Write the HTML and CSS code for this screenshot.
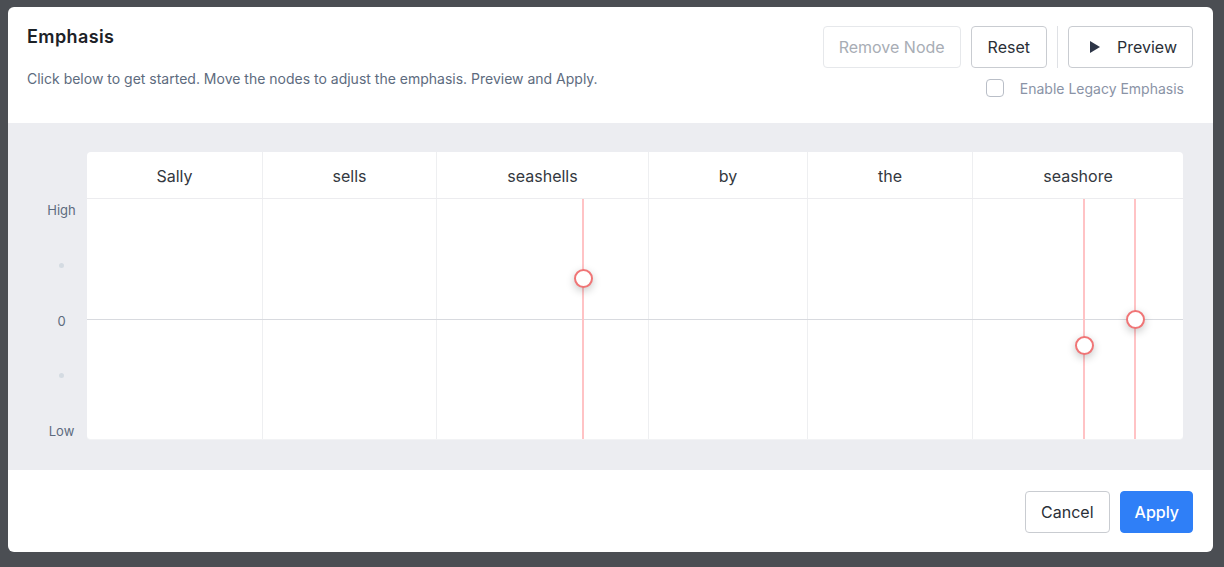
FILE: index.html
```html
<!DOCTYPE html>
<html>
<head>
<meta charset="utf-8">
<link rel="stylesheet" href="styles.css">
</head>
<body>
<div class="backdrop">
  <div class="modal">
    <div class="modal-header">
      <div class="intro">
        <h2 class="title">Emphasis</h2>
        <p class="desc">Click below to get started. Move the nodes to adjust the emphasis. Preview and Apply.</p>
      </div>
      <div class="controls">
        <div class="btn-row">
          <button class="btn btn-disabled">Remove Node</button>
          <button class="btn">Reset</button>
          <span class="sep"></span>
          <button class="btn btn-preview">
            <svg class="play" width="10" height="12" viewBox="0 0 10 12"><path d="M0 0 L10 6 L0 12 Z" fill="#2d3547"/></svg>
            Preview
          </button>
        </div>
        <label class="legacy"><span class="checkbox"></span>Enable Legacy Emphasis</label>
      </div>
    </div>
    <div class="modal-body">
      <div class="axis">
        <div class="axis-head"></div>
        <div class="axis-ticks">
          <span class="tick">High</span>
          <span class="tick"><i class="dot"></i></span>
          <span class="tick">0</span>
          <span class="tick"><i class="dot"></i></span>
          <span class="tick">Low</span>
        </div>
      </div>
      <div class="chart">
        <div class="words">
          <div class="word first" style="width:175px">Sally</div>
          <div class="word" style="width:174px">sells</div>
          <div class="word" style="width:212px">seashells</div>
          <div class="word" style="width:159px">by</div>
          <div class="word" style="width:165px">the</div>
          <div class="word" style="width:211px">seashore</div>
        </div>
        <div class="plot">
          <div class="cols">
            <div class="col first" style="width:175px"></div>
            <div class="col" style="width:174px"></div>
            <div class="col" style="width:212px"></div>
            <div class="col" style="width:159px"></div>
            <div class="col" style="width:165px"></div>
            <div class="col" style="width:211px"></div>
          </div>
          <div class="zero"></div>
          <div class="vline" style="left:496px"></div>
          <div class="vline" style="left:997px"></div>
          <div class="vline" style="left:1048px"></div>
          <div class="node" style="left:496px;top:79px"></div>
          <div class="node" style="left:997px;top:146px"></div>
          <div class="node" style="left:1048px;top:120px"></div>
        </div>
      </div>
    </div>
    <div class="modal-footer">
      <button class="btn btn-cancel">Cancel</button>
      <button class="btn btn-primary">Apply</button>
    </div>
  </div>
</div>
</body>
</html>
```
FILE: styles.css
```css
* { box-sizing: border-box; }
html, body { margin: 0; padding: 0; }
body {
  font-family: Inter, "Noto Sans", "Liberation Sans", sans-serif;
  background: #4b4e53;
  width: 1224px;
  height: 567px;
  overflow: hidden;
}
.backdrop {
  padding: 7px 11px 15px 8px;
}
.modal {
  width: 1205px;
  height: 545px;
  background: #fff;
  border-radius: 6px;
  overflow: hidden;
  display: flex;
  flex-direction: column;
}
.modal-header {
  height: 116px;
  display: flex;
  justify-content: space-between;
  padding: 19px 20px 0 19px;
}
.title {
  margin: 0;
  padding-top: 1px;
  font-size: 18px;
  font-weight: 600;
  letter-spacing: 0.4px;
  color: #1c2127;
  line-height: 20px;
}
.desc {
  margin: 23px 0 0;
  font-size: 14px;
  color: #5d6b7e;
  line-height: 17px;
}
.controls {
  display: flex;
  flex-direction: column;
  align-items: flex-end;
}
.btn-row {
  display: flex;
  align-items: center;
  gap: 10px;
}
.btn {
  font-family: inherit;
  height: 42px;
  padding: 0 16px;
  font-size: 16px;
  color: #2a2f37;
  background: #fff;
  border: 1px solid #c9ccd1;
  border-radius: 4px;
  display: inline-flex;
  align-items: center;
}
.btn-disabled {
  color: #a8adb5;
  border-color: #e6e8eb;
  padding: 0 15px;
}
.sep {
  width: 1px;
  height: 42px;
  background: #dfe1e5;
}
.btn-preview {
  padding: 0 15px 0 21px;
  gap: 17px;
}
.play { display: block; }
.legacy {
  margin-top: 11px;
  margin-right: 9px;
  display: flex;
  align-items: center;
  gap: 16px;
  font-size: 14px;
  color: #8a93a6;
}
.checkbox {
  width: 18px;
  height: 18px;
  border: 1px solid #b9bec7;
  border-radius: 4px;
  background: #fff;
}
.modal-body {
  height: 347px;
  background: #ecedf1;
  display: flex;
  padding: 29px 30px 30px 0;
}
.axis {
  width: 79px;
  padding-left: 28px;
  display: flex;
  flex-direction: column;
}
.axis-head { height: 47px; flex: none; }
.axis-ticks {
  flex: none;
  height: 243px;
  display: flex;
  flex-direction: column;
  justify-content: space-between;
}
.tick {
  height: 22px;
  display: flex;
  align-items: center;
  justify-content: center;
  font-size: 13px;
  color: #5d6b7e;
}
.dot {
  width: 5px;
  height: 5px;
  border-radius: 50%;
  background: #d4dbe2;
}
.chart {
  width: 1096px;
  background: #fff;
  border-radius: 4px;
  display: flex;
  flex-direction: column;
  overflow: hidden;
  border-bottom: 1px solid #f2f3f5;
}
.words {
  display: flex;
  height: 47px;
  border-bottom: 1px solid #ececef;
}
.word {
  display: flex;
  align-items: center;
  justify-content: center;
  padding-top: 1px;
  font-size: 16px;
  color: #333840;
  border-left: 1px solid #eeeff1;
}
.word.first, .col.first { border-left: none; }
.plot {
  position: relative;
  flex: 1;
}
.cols {
  display: flex;
  height: 100%;
}
.col {
  border-left: 1px solid #eeeff1;
}
.zero {
  position: absolute;
  left: 0;
  right: 0;
  top: 120px;
  height: 1px;
  background: #d8dadf;
}
.vline {
  position: absolute;
  top: 0;
  bottom: 0;
  width: 2px;
  margin-left: -1px;
  background: #ffc3c5;
}
.node {
  position: absolute;
  width: 19px;
  height: 19px;
  margin: -9px 0 0 -9px;
  border-radius: 50%;
  background: #fff;
  border: 2px solid #f07576;
  box-shadow: 0 3px 8px rgba(0,0,0,0.22);
}
.modal-footer {
  flex: 1;
  display: flex;
  justify-content: flex-end;
  align-items: flex-start;
  gap: 10px;
  padding: 21px 20px 0 0;
}
.btn-cancel { padding: 0 15px; }
.btn-primary {
  background: #2f7ff7;
  border-color: #2f7ff7;
  color: #fff;
  font-weight: 500;
  padding: 0 13px 0 14px;
}
```
